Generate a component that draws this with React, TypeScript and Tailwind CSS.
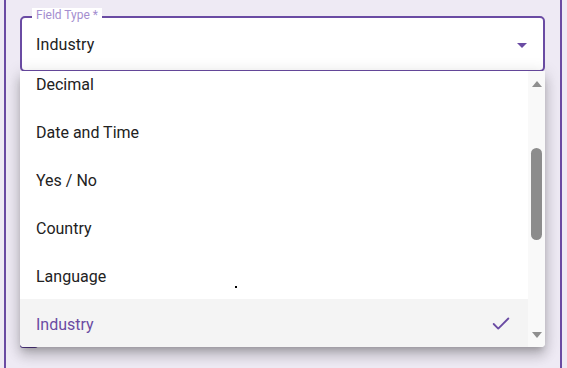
import { Check } from "lucide-react";

const options = ["Decimal", "Date and Time", "Yes / No", "Country", "Language", "Industry"];

export default function App() {
  const selected = "Industry";

  return (
    <div className="w-[567px] h-[368px] overflow-hidden bg-[#eeeaf4] font-['Roboto',sans-serif] pl-1">
      <div className="w-[558px] h-full border-x-2 border-[#6a4ba3] pl-[14px] pr-[15px] pt-4">
        {/* select */}
        <div className="relative">
          <div className="h-[56px] rounded-[5px] border-2 border-[#6a4ba3] bg-white flex items-center pl-[14px] pr-4">
            <span className="text-[16px] text-[#222] tracking-[0.1px] mt-[1px]">{selected}</span>
            <span className="ml-auto mt-[2px] w-0 h-0 border-l-[5px] border-r-[5px] border-t-[5px] border-l-transparent border-r-transparent border-t-[#6a4ba3]" />
          </div>
          <span className="absolute left-[12px] -top-[8px] px-[4px] bg-white text-[12px] leading-[14px] text-[#a48ecf]">
            Field Type *
          </span>

          {/* menu */}
          <div className="absolute left-0 right-0 top-[55px] z-10 h-[276px] bg-white flex overflow-hidden rounded-b-[4px] shadow-[0_5px_6px_-3px_rgba(0,0,0,0.2),0_9px_12px_1px_rgba(0,0,0,0.14),0_3px_16px_2px_rgba(0,0,0,0.12)]">
            <div className="flex-1 overflow-hidden">
              <div className="-mt-3">
                {options.map((o) => (
                  <div
                    key={o}
                    className={`h-12 flex items-center pl-4 pr-4 pt-[3px] text-[16px] ${
                      o === selected ? "bg-[#f4f4f4] text-[#6a4ba3]" : "text-[#222]"
                    }`}
                  >
                    {o}
                    {o === selected && <Check size={22} strokeWidth={2} className="ml-auto -mt-[2px] text-[#6a4ba3]" />}
                  </div>
                ))}
              </div>
            </div>
            <div className="w-[17px] bg-[#f9f9f9] flex flex-col items-center">
              <span className="mt-[10px] w-0 h-0 border-l-[5px] border-r-[5px] border-b-[6px] border-l-transparent border-r-transparent border-b-[#8f8f8f]" />
              <div className="mt-[61px] w-[11px] h-[92px] rounded-full bg-[#8c8c8c]" />
              <span className="mt-auto mb-[9px] w-0 h-0 border-l-[5px] border-r-[5px] border-t-[6px] border-l-transparent border-r-transparent border-t-[#8f8f8f]" />
            </div>
          </div>
          <span className="absolute left-[215px] top-[270px] z-20 w-[2px] h-[2px] bg-black" />
        </div>

        {/* checkbox hidden behind the menu */}
        <div className="mt-[258px] w-[18px] h-[18px] rounded-[3px] border-2 border-[#5a3d92]" />
      </div>
    </div>
  );
}
